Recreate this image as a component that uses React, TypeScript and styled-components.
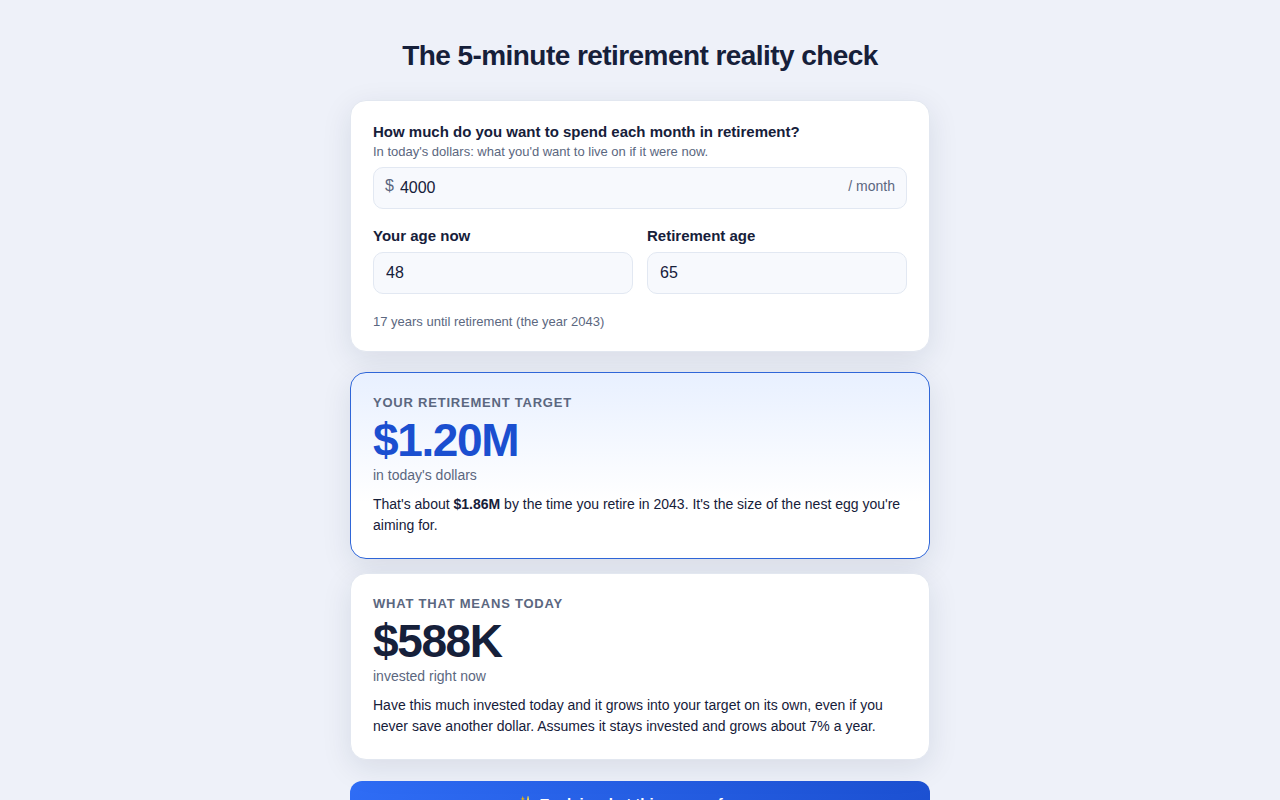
import React, { useId, useState } from "react";
import styled, { createGlobalStyle } from "styled-components";

const GlobalStyle = createGlobalStyle`
  *, *::before, *::after { box-sizing: border-box; }
  body {
    margin: 0;
    background: #eef1f9;
    color: #16203a;
    font-family: "Liberation Sans", Arial, sans-serif;
    font-size: 16px;
    line-height: 24px;
  }
`;

const Page = styled.main`
  max-width: 620px;
  margin: 0 auto;
  padding: 36px 20px 60px;
`;

const Title = styled.h1`
  margin: 0 0 24px;
  font-size: 28px;
  line-height: 40px;
  letter-spacing: -0.02em;
  text-align: center;
`;

const Card = styled.section<{ $highlight?: boolean }>`
  padding: 20px 22px;
  border: 1px solid ${(p) => (p.$highlight ? "#2f66d8" : "#e2e7f0")};
  border-radius: 16px;
  background: ${(p) =>
    p.$highlight ? "linear-gradient(180deg, #e8f0ff, #ffffff 70%)" : "#ffffff"};
  box-shadow: 0 8px 30px rgba(20, 40, 66, 0.1);
`;

const ResultCard = styled(Card)`
  padding-bottom: 22px;
`;

const Results = styled.div`
  display: grid;
  gap: 14px;
  margin: 20px 0 21px;
`;

const FieldLabel = styled.label`
  display: block;
  font-size: 15px;
  line-height: 22px;
  font-weight: 700;
`;

const Note = styled.p`
  margin: 0;
  color: #5b6780;
  font-size: 13px;
  line-height: 18px;
`;

const Hint = styled(Note)`
  margin-bottom: 6px;
`;

const InputBox = styled.div`
  display: flex;
  align-items: center;
  height: 42px;
  margin-top: 5px;
  border: 1px solid #e2e8f2;
  border-radius: 10px;
  background: #f7f9fd;
  color: #5b6780;
`;

const Prefix = styled.span`
  padding: 0 0 4px 11px;
`;

const Suffix = styled.span`
  padding: 0 11px 4px 0;
  font-size: 14px;
`;

const NumberInput = styled.input<{ $prefixed?: boolean }>`
  flex: 1;
  min-width: 0;
  height: 100%;
  padding: 0 ${(p) => (p.$prefixed ? 6 : 12)}px;
  border: 0;
  border-radius: 10px;
  outline-color: #2f6df6;
  background: transparent;
  color: #16203a;
  font: inherit;
`;

const AgeRow = styled.div`
  display: grid;
  grid-template-columns: 1fr 1fr;
  gap: 14px;
  margin: 16px 0 19px;
`;

const Eyebrow = styled.h2`
  margin: 0;
  color: #5b6780;
  font-size: 13px;
  line-height: 20px;
  letter-spacing: 0.06em;
  text-transform: uppercase;
`;

const Amount = styled.div<{ $accent?: boolean }>`
  margin-top: 2px;
  color: ${(p) => (p.$accent ? "#1b4fd0" : "#16203a")};
  font-size: 46px;
  line-height: 50px;
  font-weight: 700;
  letter-spacing: -0.03em;
`;

const Unit = styled.div`
  color: #5b6780;
  font-size: 14px;
  line-height: 20px;
`;

const Description = styled.p`
  margin: 9px 0 0;
  font-size: 14px;
  line-height: 21px;
`;

const ExplainButton = styled.button`
  display: block;
  width: 100%;
  padding: 11px 20px;
  border: 0;
  border-radius: 12px;
  background: linear-gradient(135deg, #2f6df6, #1b4fd0);
  color: #ffffff;
  font: inherit;
  font-size: 15px;
  font-weight: 700;
  cursor: pointer;
`;

type AgeFieldProps = {
  label: string;
  value: string;
  onChange: (value: string) => void;
};

function AgeField({ label, value, onChange }: AgeFieldProps) {
  const id = useId();
  return (
    <div>
      <FieldLabel htmlFor={id}>{label}</FieldLabel>
      <InputBox>
        <NumberInput
          id={id}
          inputMode="numeric"
          value={value}
          onChange={(e) => onChange(e.target.value)}
        />
      </InputBox>
    </div>
  );
}

export default function App() {
  const [spend, setSpend] = useState("4000");
  const [age, setAge] = useState("48");
  const [retireAge, setRetireAge] = useState("65");

  return (
    <>
      <GlobalStyle />
      <Page>
        <Title>The 5-minute retirement reality check</Title>
        <Card>
          <FieldLabel htmlFor="spend">
            How much do you want to spend each month in retirement?
          </FieldLabel>
          <Hint id="spend-note">
            In today's dollars: what you'd want to live on if it were now.
          </Hint>
          <InputBox>
            <Prefix>$</Prefix>
            <NumberInput
              id="spend"
              $prefixed
              inputMode="numeric"
              aria-describedby="spend-note"
              value={spend}
              onChange={(e) => setSpend(e.target.value)}
            />
            <Suffix>/ month</Suffix>
          </InputBox>
          <AgeRow>
            <AgeField label="Your age now" value={age} onChange={setAge} />
            <AgeField
              label="Retirement age"
              value={retireAge}
              onChange={setRetireAge}
            />
          </AgeRow>
          <Note>17 years until retirement (the year 2043)</Note>
        </Card>
        <Results>
          <ResultCard $highlight>
            <Eyebrow>Your retirement target</Eyebrow>
            <Amount $accent>$1.20M</Amount>
            <Unit>in today's dollars</Unit>
            <Description>
              That's about <strong>$1.86M</strong> by the time you retire in
              2043. It's the size of the nest egg you're aiming for.
            </Description>
          </ResultCard>
          <ResultCard>
            <Eyebrow>What that means today</Eyebrow>
            <Amount>$588K</Amount>
            <Unit>invested right now</Unit>
            <Description>
              Have this much invested today and it grows into your target on its
              own, even if you never save another dollar. Assumes it stays
              invested and grows about 7% a year.
            </Description>
          </ResultCard>
        </Results>
        <ExplainButton type="button">
          ✨ Explain what this means for me
        </ExplainButton>
      </Page>
    </>
  );
}
